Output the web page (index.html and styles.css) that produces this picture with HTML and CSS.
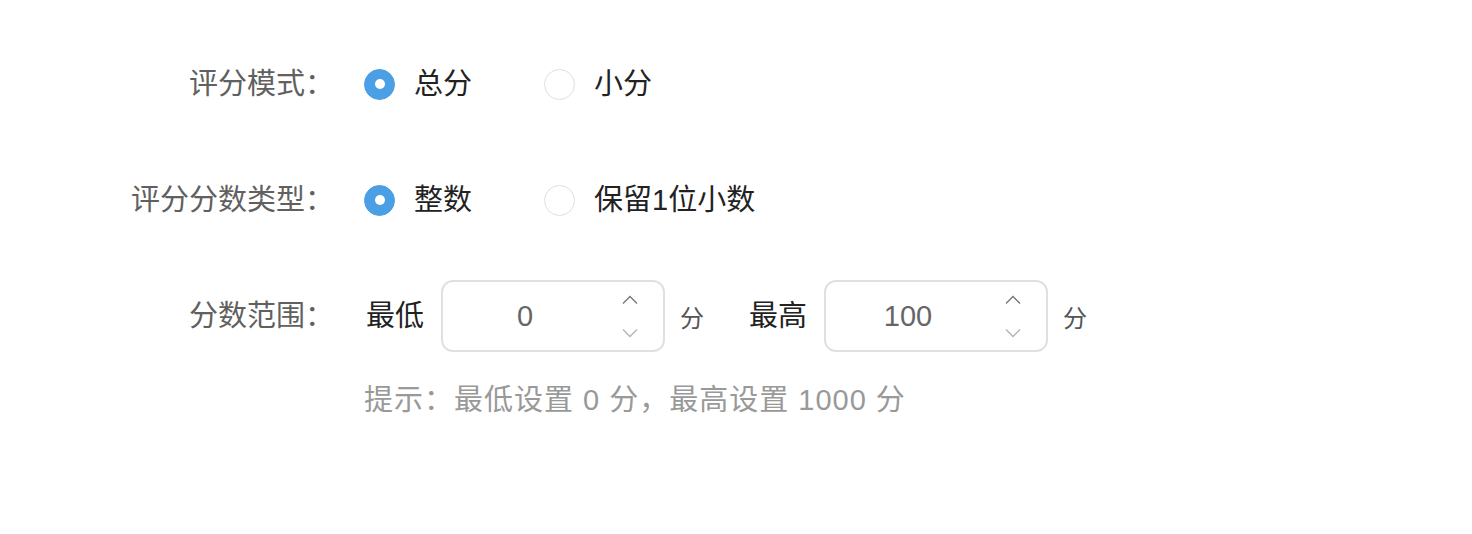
FILE: index.html
```html
<!DOCTYPE html>
<html lang="zh-CN">
<head>
    <meta charset="UTF-8">
    <title>评分设置</title>
    <link rel="stylesheet" href="styles.css">
</head>
<body>
    <div class="score-form">
        <div class="form-item">
            <div class="form-label">评分模式：</div>
            <div class="radio-group">
                <label class="radio-item">
                    <span class="radio checked"></span>
                    <span class="radio-text">总分</span>
                </label>
                <label class="radio-item">
                    <span class="radio"></span>
                    <span class="radio-text">小分</span>
                </label>
            </div>
        </div>

        <div class="form-item">
            <div class="form-label">评分分数类型：</div>
            <div class="radio-group">
                <label class="radio-item">
                    <span class="radio checked"></span>
                    <span class="radio-text">整数</span>
                </label>
                <label class="radio-item">
                    <span class="radio"></span>
                    <span class="radio-text">保留1位小数</span>
                </label>
            </div>
        </div>

        <div class="form-item range-item">
            <div class="form-label">分数范围：</div>
            <div class="range-group">
                <span class="range-label">最低</span>
                <div class="number-input">
                    <span class="number-value">0</span>
                    <div class="spin">
                        <svg class="spin-up" width="16" height="10" viewBox="0 0 16 10"><path d="M1 8.5 L8 1.5 L15 8.5" fill="none" stroke="currentColor" stroke-width="1.4"/></svg>
                        <svg class="spin-down" width="16" height="10" viewBox="0 0 16 10"><path d="M1 1.5 L8 8.5 L15 1.5" fill="none" stroke="currentColor" stroke-width="1.4"/></svg>
                    </div>
                </div>
                <span class="unit">分</span>

                <span class="range-label range-max">最高</span>
                <div class="number-input">
                    <span class="number-value">100</span>
                    <div class="spin">
                        <svg class="spin-up" width="16" height="10" viewBox="0 0 16 10"><path d="M1 8.5 L8 1.5 L15 8.5" fill="none" stroke="currentColor" stroke-width="1.4"/></svg>
                        <svg class="spin-down" width="16" height="10" viewBox="0 0 16 10"><path d="M1 1.5 L8 8.5 L15 1.5" fill="none" stroke="currentColor" stroke-width="1.4"/></svg>
                    </div>
                </div>
                <span class="unit">分</span>
            </div>
        </div>

        <div class="form-tip">提示：最低设置 0 分，最高设置 1000 分</div>
    </div>
</body>
</html>
```

FILE: styles.css
```css
* {
    margin: 0;
    padding: 0;
    box-sizing: border-box;
}

body {
    font-family: 'Liberation Sans', 'Noto Sans CJK SC', sans-serif;
    background: #fff;
    color: #333;
}

.score-form {
    padding-top: 48px;
}

.form-item {
    display: flex;
    align-items: center;
    height: 72px;
    margin-bottom: 44px;
}

.form-item.range-item {
    margin-bottom: 0;
}

.form-label {
    width: 334px;
    text-align: right;
    font-size: 29px;
    line-height: 36px;
    color: #606060;
    flex-shrink: 0;
}

.radio-group {
    display: flex;
    align-items: center;
    margin-left: 30px;
}

.radio-item {
    display: flex;
    align-items: center;
    margin-right: 72px;
    cursor: pointer;
}

.radio {
    width: 31px;
    height: 31px;
    border: 1px solid #dcdfe6;
    border-radius: 50%;
    background: #fff;
    display: flex;
    align-items: center;
    justify-content: center;
}

.radio.checked {
    background: #4a9fe5;
    border-color: #4a9fe5;
}

.radio.checked::after {
    content: '';
    width: 10px;
    height: 10px;
    border-radius: 50%;
    background: #fff;
}

.radio-text {
    margin-left: 19px;
    font-size: 29px;
    line-height: 36px;
    color: #222;
}

.range-group {
    display: flex;
    align-items: center;
    margin-left: 32px;
}

.range-label {
    font-size: 29px;
    line-height: 36px;
    color: #222;
}

.range-max {
    margin-left: 45px;
}

.number-input {
    display: flex;
    align-items: center;
    width: 224px;
    height: 72px;
    margin-left: 17px;
    border: 2px solid #e0e0e0;
    border-radius: 12px;
    background: #fff;
}

.number-value {
    flex: 1;
    text-align: center;
    font-size: 29px;
    line-height: 36px;
    color: #666;
}

.spin {
    width: 56px;
    height: 100%;
    display: flex;
    flex-direction: column;
    align-items: center;
    justify-content: center;
    gap: 23px;
    padding-right: 10px;
}

.spin svg {
    display: block;
}

.spin-up {
    color: #777;
}

.spin-down {
    color: #b5b5b5;
}

.unit {
    margin-left: 15px;
    font-size: 24px;
    color: #555;
}

.form-tip {
    margin-top: 28px;
    margin-left: 364px;
    font-size: 29px;
    line-height: 40px;
    letter-spacing: 1px;
    color: #999;
}
```
